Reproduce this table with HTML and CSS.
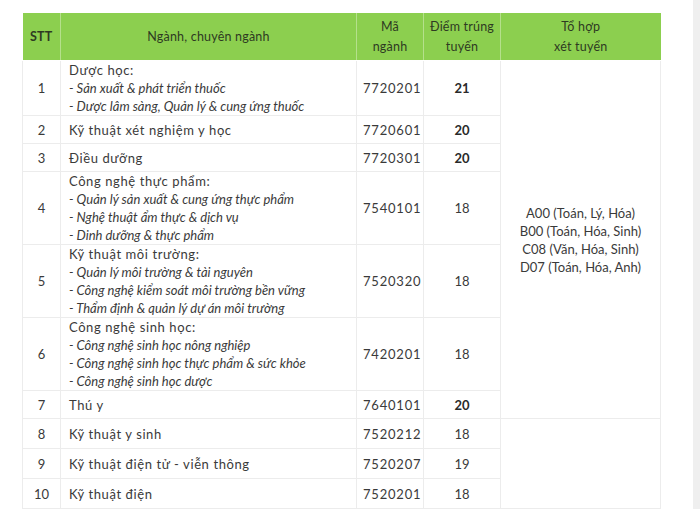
FILE: index.html
```html
<!DOCTYPE html>
<html lang="vi">
<head>
<meta charset="utf-8">
<link rel="stylesheet" href="styles.css">
</head>
<body>
<div class="page">
  <main class="main">
    <table class="tbl">
      <colgroup>
        <col class="c-stt"><col class="c-name"><col class="c-code"><col class="c-score"><col class="c-combo">
      </colgroup>
      <thead>
        <tr>
          <th>STT</th>
          <th>Ngành, chuyên ngành</th>
          <th>Mã<br>ngành</th>
          <th>Điểm trúng<br>tuyến</th>
          <th>Tổ hợp<br>xét tuyển</th>
        </tr>
      </thead>
      <tbody>
        <tr>
          <td class="stt">1</td>
          <td class="name">Dược học:<br><i>- Sản xuất &amp; phát triển thuốc</i><br><i>- Dược lâm sàng, Quản lý &amp; cung ứng thuốc</i></td>
          <td class="code">7720201</td>
          <td class="score b">21</td>
          <td class="combo" rowspan="7">A00 (Toán, Lý, Hóa)<br>B00 (Toán, Hóa, Sinh)<br>C08 (Văn, Hóa, Sinh)<br>D07 (Toán, Hóa, Anh)</td>
        </tr>
        <tr>
          <td class="stt">2</td>
          <td class="name">Kỹ thuật xét nghiệm y học</td>
          <td class="code">7720601</td>
          <td class="score b">20</td>
        </tr>
        <tr>
          <td class="stt">3</td>
          <td class="name">Điều dưỡng</td>
          <td class="code">7720301</td>
          <td class="score b">20</td>
        </tr>
        <tr>
          <td class="stt">4</td>
          <td class="name">Công nghệ thực phẩm:<br><i>- Quản lý sản xuất &amp; cung ứng thực phẩm</i><br><i>- Nghệ thuật ẩm thực &amp; dịch vụ</i><br><i>- Dinh dưỡng &amp; thực phẩm</i></td>
          <td class="code">7540101</td>
          <td class="score">18</td>
        </tr>
        <tr>
          <td class="stt">5</td>
          <td class="name">Kỹ thuật môi trường:<br><i>- Quản lý môi trường &amp; tài nguyên</i><br><i>- Công nghệ kiểm soát môi trường bền vững</i><br><i>- Thẩm định &amp; quản lý dự án môi trường</i></td>
          <td class="code">7520320</td>
          <td class="score">18</td>
        </tr>
        <tr>
          <td class="stt">6</td>
          <td class="name">Công nghệ sinh học:<br><i>- Công nghệ sinh học nông nghiệp</i><br><i>- Công nghệ sinh học thực phẩm &amp; sức khỏe</i><br><i>- Công nghệ sinh học dược</i></td>
          <td class="code">7420201</td>
          <td class="score">18</td>
        </tr>
        <tr>
          <td class="stt">7</td>
          <td class="name">Thú y</td>
          <td class="code">7640101</td>
          <td class="score b">20</td>
        </tr>
        <tr class="tall">
          <td class="stt">8</td>
          <td class="name">Kỹ thuật y sinh</td>
          <td class="code">7520212</td>
          <td class="score">18</td>
          <td class="combo" rowspan="3"></td>
        </tr>
        <tr class="tall">
          <td class="stt">9</td>
          <td class="name">Kỹ thuật điện tử - viễn thông</td>
          <td class="code">7520207</td>
          <td class="score">19</td>
        </tr>
        <tr class="tall">
          <td class="stt">10</td>
          <td class="name">Kỹ thuật điện</td>
          <td class="code">7520201</td>
          <td class="score">18</td>
        </tr>
      </tbody>
    </table>
  </main>
  <div class="strip"></div>
</div>
</body>
</html>
```
FILE: styles.css
```css
html, body {
  margin: 0;
  padding: 0;
  background: #ffffff;
}
.page {
  display: flex;
  width: 700px;
  height: 509px;
  overflow: hidden;
}
.main {
  flex: 1;
  padding: 13px 0 0 22px;
}
.strip {
  width: 7px;
  background: #efefef;
}
.tbl {
  border-collapse: collapse;
  table-layout: fixed;
  width: 638px;
  font-family: "Lato", "Noto Sans", sans-serif;
  font-size: 13px;
  color: #3a3a3a;
}
.tbl i {
  letter-spacing: 0;
}
.c-stt { width: 38px; }
.c-name { width: 296px; }
.c-code { width: 67px; }
.c-score { width: 77px; }
.c-combo { width: 160px; }
.tbl th {
  background: #8ccf4f;
  color: #2e3a22;
  font-weight: 400;
  font-size: 12.5px;
  letter-spacing: 0.2px;
  height: 47px;
  padding: 0;
  line-height: 20px;
  text-align: center;
  border-right: 1px solid #b5e08c;
  border-bottom: 1px solid #ffffff;
}
.tbl th:first-child { font-weight: 700; }
.tbl th:last-child { border-right: none; }
.tbl td {
  border: 1px solid #ececec;
  padding: 0;
  line-height: 18px;
  height: 27px;
  vertical-align: middle;
}
.tbl tr.tall td { height: 29px; }
.tbl td.stt { text-align: center; }
.tbl td.name { padding-left: 8px; letter-spacing: 0.6px; }
.tbl td.code { padding-left: 6px; letter-spacing: 0.8px; }
.tbl td.score { text-align: center; }
.tbl td.b { font-weight: 700; color: #2a2a2a; }
.tbl td.combo { text-align: center; }
```
